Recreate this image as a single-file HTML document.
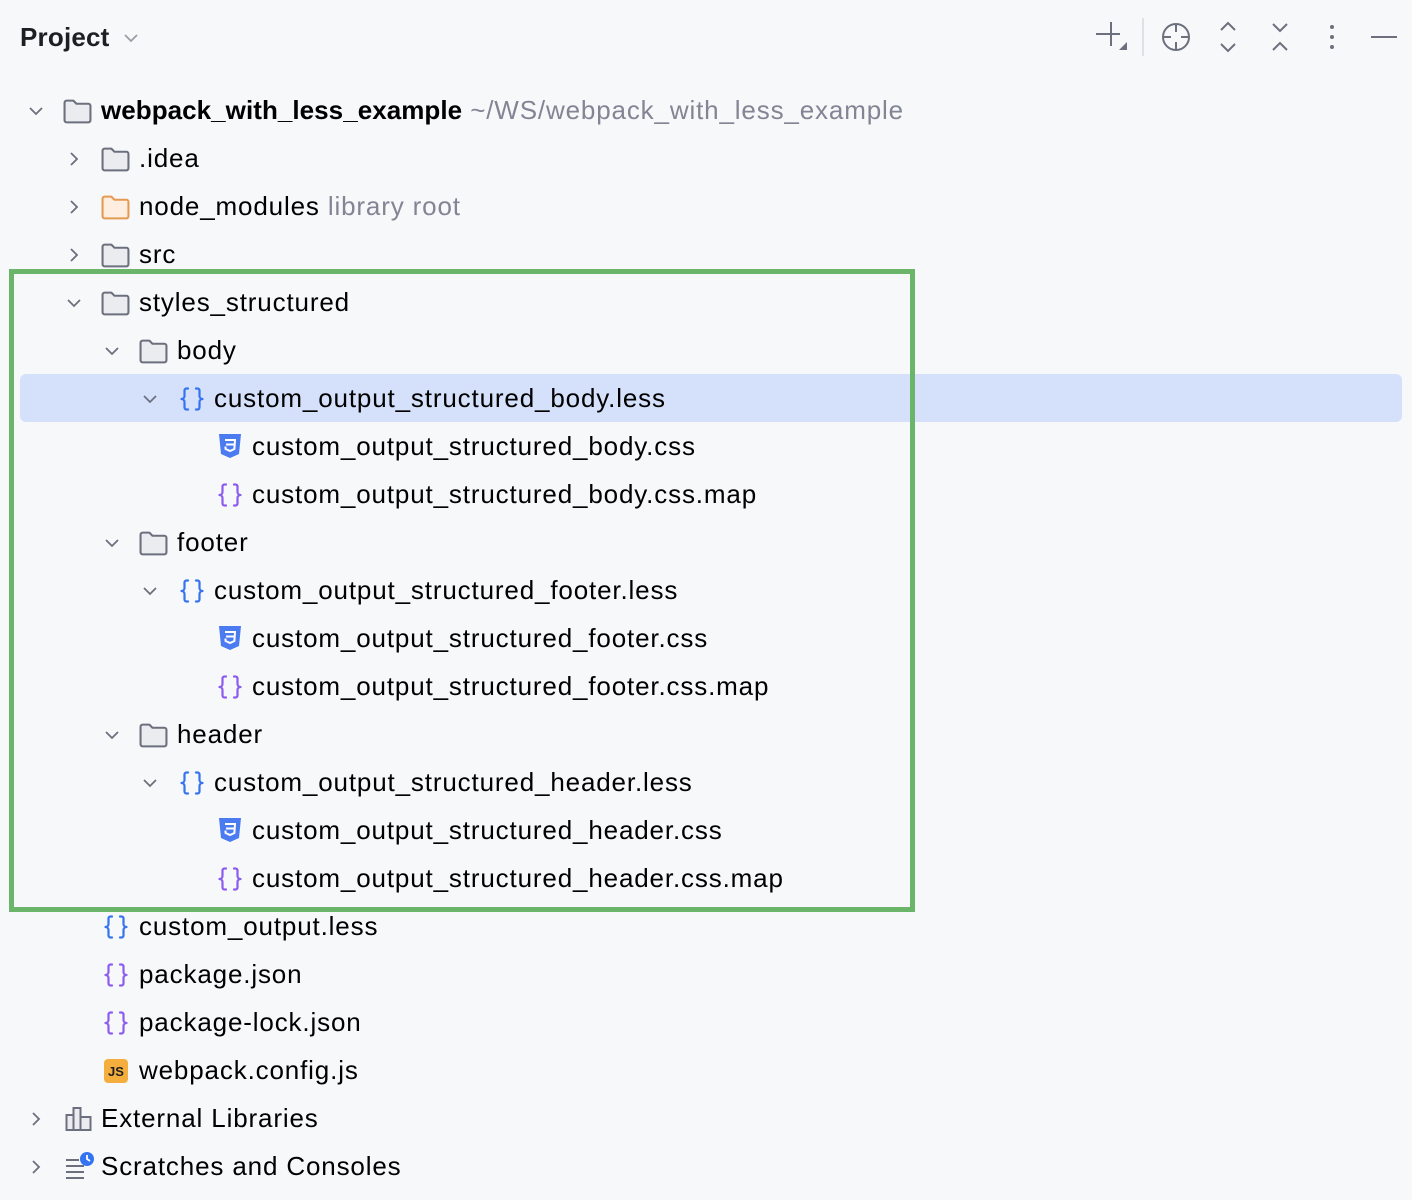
<!DOCTYPE html>
<html><head><meta charset="utf-8"><style>
body{margin:0;width:1412px;height:1200px;background:#f7f8fa;font-family:"Liberation Sans",sans-serif;color:#000;position:relative;overflow:hidden}
.r{position:absolute;height:48px;line-height:47px;font-size:26px;letter-spacing:0.85px;white-space:nowrap}
.r b{letter-spacing:0.05px}
.r svg{position:absolute}
.g{color:#818594}
.a{position:absolute;top:0}
</style></head><body>
<svg width="0" height="0" style="position:absolute">
<defs>
<symbol id="fold" viewBox="0 0 28 26"><path d="M1.5 4.5a2 2 0 0 1 2-2h6.5l3 3h11.5a2 2 0 0 1 2 2v14a2 2 0 0 1-2 2h-21a2 2 0 0 1-2-2z" fill="#ebecf0" stroke="#6c707e" stroke-width="2" stroke-linejoin="round"/></symbol>
<symbol id="ofold" viewBox="0 0 28 26"><path d="M1.5 4.5a2 2 0 0 1 2-2h6.5l3 3h11.5a2 2 0 0 1 2 2v14a2 2 0 0 1-2 2h-21a2 2 0 0 1-2-2z" fill="#fdeee0" stroke="#e59a52" stroke-width="2" stroke-linejoin="round"/></symbol>
<symbol id="br" viewBox="0 0 26 26"><path d="M9 2.5h-1.5a2 2 0 0 0-2 2v5.5a3 3 0 0 1-3 3a3 3 0 0 1 3 3v5.5a2 2 0 0 0 2 2h1.5M17 2.5h1.5a2 2 0 0 1 2 2v5.5a3 3 0 0 0 3 3a3 3 0 0 0-3 3v5.5a2 2 0 0 1-2 2h-1.5" fill="none" stroke="currentColor" stroke-width="2.2" stroke-linecap="round" stroke-linejoin="round"/></symbol>
<symbol id="css" viewBox="0 0 26 26"><path d="M2 1h22l-2 20-9 4-9-4z" fill="#4a7bf0"/><path d="M8 7h10l-.6 9-4.4 2-4.4-2-.2-2.5M9 11.5h8.5" fill="none" stroke="#fff" stroke-width="2"/></symbol>
<symbol id="dn" viewBox="0 0 16 16"><path d="M2 5l6 6 6-6" fill="none" stroke="#6c707e" stroke-width="1.8"/></symbol>
<symbol id="rt" viewBox="0 0 16 16"><path d="M5 2l6 6-6 6" fill="none" stroke="#6c707e" stroke-width="1.8"/></symbol>
</defs></svg>

<div style="position:absolute;left:20px;top:18px;font-size:26px;font-weight:bold;color:#1e1f22;line-height:38px;letter-spacing:0.2px">Project</div>
<svg style="position:absolute;left:123px;top:30px" width="16" height="16"><path d="M2 5l6 6 6-6" fill="none" stroke="#9a9ca6" stroke-width="1.8"/></svg>

<svg style="position:absolute;left:1090px;top:18px" width="320" height="40" fill="none" stroke="#6c707e" stroke-width="2">
<path d="M21 4v24M6 16h24"/><path d="M37 24v8h-8z" fill="#6c707e" stroke="none"/>
<path d="M53 0v38" stroke="#dfe1e5"/>
<circle cx="86" cy="19" r="13"/><path d="M86 6v8M86 24v8M73 19h8M91 19h8"/>
<path d="M131 12l7-7 7 7M131 26l7 7 7-7"/>
<path d="M183 6l7 7 7-7M183 32l7-7 7 7"/>
<circle cx="242" cy="9" r="2" fill="#6c707e" stroke="none"/><circle cx="242" cy="19" r="2" fill="#6c707e" stroke="none"/><circle cx="242" cy="29" r="2" fill="#6c707e" stroke="none"/>
<path d="M281 19h26"/>
</svg>

<div style="position:absolute;left:20px;top:374px;width:1382px;height:48px;background:#d5e1fb;border-radius:6px"></div>
<div style="position:absolute;left:9px;top:269px;width:896px;height:633px;border:5px solid #6ab56a"></div>

<div class="r" style="top:87px;left:0"><svg class="a" style="left:28px;top:16px" width="16" height="16"><use href="#dn"/></svg><svg style="left:63px;top:11px" width="29" height="27"><use href="#fold"/></svg><span style="position:absolute;left:101px"><b>webpack_with_less_example</b> <span class="g">~/WS/webpack_with_less_example</span></span></div>
<div class="r" style="top:135px;left:0"><svg style="left:66px;top:16px" width="16" height="16"><use href="#rt"/></svg><svg style="left:101px;top:11px" width="29" height="27"><use href="#fold"/></svg><span style="position:absolute;left:139px">.idea</span></div>
<div class="r" style="top:183px;left:0"><svg style="left:66px;top:16px" width="16" height="16"><use href="#rt"/></svg><svg style="left:101px;top:11px" width="29" height="27"><use href="#ofold"/></svg><span style="position:absolute;left:139px">node_modules <span class="g">library root</span></span></div>
<div class="r" style="top:231px;left:0"><svg style="left:66px;top:16px" width="16" height="16"><use href="#rt"/></svg><svg style="left:101px;top:11px" width="29" height="27"><use href="#fold"/></svg><span style="position:absolute;left:139px">src</span></div>
<div class="r" style="top:279px;left:0"><svg style="left:66px;top:16px" width="16" height="16"><use href="#dn"/></svg><svg style="left:101px;top:11px" width="29" height="27"><use href="#fold"/></svg><span style="position:absolute;left:139px">styles_structured</span></div>

<div class="r" style="top:327px;left:0"><svg style="left:104px;top:16px" width="16" height="16"><use href="#dn"/></svg><svg style="left:139px;top:11px" width="29" height="27"><use href="#fold"/></svg><span style="position:absolute;left:177px">body</span></div>
<div class="r" style="top:375px;left:0"><svg style="left:142px;top:16px" width="16" height="16"><use href="#dn"/></svg><svg style="left:179px;top:11px;color:#3574f0" width="26" height="26"><use href="#br"/></svg><span style="position:absolute;left:214px">custom_output_structured_body.less</span></div>
<div class="r" style="top:423px;left:0"><svg style="left:217px;top:10px" width="26" height="26"><use href="#css"/></svg><span style="position:absolute;left:252px">custom_output_structured_body.css</span></div>
<div class="r" style="top:471px;left:0"><svg style="left:217px;top:11px;color:#8b5cf0" width="26" height="26"><use href="#br"/></svg><span style="position:absolute;left:252px">custom_output_structured_body.css.map</span></div>

<div class="r" style="top:519px;left:0"><svg style="left:104px;top:16px" width="16" height="16"><use href="#dn"/></svg><svg style="left:139px;top:11px" width="29" height="27"><use href="#fold"/></svg><span style="position:absolute;left:177px">footer</span></div>
<div class="r" style="top:567px;left:0"><svg style="left:142px;top:16px" width="16" height="16"><use href="#dn"/></svg><svg style="left:179px;top:11px;color:#3574f0" width="26" height="26"><use href="#br"/></svg><span style="position:absolute;left:214px">custom_output_structured_footer.less</span></div>
<div class="r" style="top:615px;left:0"><svg style="left:217px;top:10px" width="26" height="26"><use href="#css"/></svg><span style="position:absolute;left:252px">custom_output_structured_footer.css</span></div>
<div class="r" style="top:663px;left:0"><svg style="left:217px;top:11px;color:#8b5cf0" width="26" height="26"><use href="#br"/></svg><span style="position:absolute;left:252px">custom_output_structured_footer.css.map</span></div>

<div class="r" style="top:711px;left:0"><svg style="left:104px;top:16px" width="16" height="16"><use href="#dn"/></svg><svg style="left:139px;top:11px" width="29" height="27"><use href="#fold"/></svg><span style="position:absolute;left:177px">header</span></div>
<div class="r" style="top:759px;left:0"><svg style="left:142px;top:16px" width="16" height="16"><use href="#dn"/></svg><svg style="left:179px;top:11px;color:#3574f0" width="26" height="26"><use href="#br"/></svg><span style="position:absolute;left:214px">custom_output_structured_header.less</span></div>
<div class="r" style="top:807px;left:0"><svg style="left:217px;top:10px" width="26" height="26"><use href="#css"/></svg><span style="position:absolute;left:252px">custom_output_structured_header.css</span></div>
<div class="r" style="top:855px;left:0"><svg style="left:217px;top:11px;color:#8b5cf0" width="26" height="26"><use href="#br"/></svg><span style="position:absolute;left:252px">custom_output_structured_header.css.map</span></div>

<div class="r" style="top:903px;left:0"><svg style="left:103px;top:11px;color:#3574f0" width="26" height="26"><use href="#br"/></svg><span style="position:absolute;left:139px">custom_output.less</span></div>
<div class="r" style="top:951px;left:0"><svg style="left:103px;top:11px;color:#8b5cf0" width="26" height="26"><use href="#br"/></svg><span style="position:absolute;left:139px">package.json</span></div>
<div class="r" style="top:999px;left:0"><svg style="left:103px;top:11px;color:#8b5cf0" width="26" height="26"><use href="#br"/></svg><span style="position:absolute;left:139px">package-lock.json</span></div>
<div class="r" style="top:1047px;left:0"><div style="position:absolute;left:104px;top:12px;width:24px;height:24px;background:#f4ae3d;border-radius:4px;font-size:13px;font-weight:bold;letter-spacing:0;line-height:26px;text-align:center;color:#1e1f22">JS</div><span style="position:absolute;left:139px">webpack.config.js</span></div>
<div class="r" style="top:1095px;left:0"><svg style="left:28px;top:16px" width="16" height="16"><use href="#rt"/></svg><svg style="left:65px;top:11px" width="28" height="26" fill="#ebecf0" stroke="#6c707e" stroke-width="2"><rect x="1.5" y="9" width="7" height="15"/><rect x="8.5" y="2" width="7" height="22"/><rect x="15.5" y="11" width="10" height="13"/></svg><span style="position:absolute;left:101px">External Libraries</span></div>
<div class="r" style="top:1143px;left:0"><svg style="left:28px;top:16px" width="16" height="16"><use href="#rt"/></svg><svg style="left:65px;top:8px" width="30" height="30" stroke="#6c707e" stroke-width="2"><path d="M1 9h13M1 15h18M1 21h18M1 27h18"/><circle cx="22" cy="8" r="7" fill="#3574f0" stroke="none"/><path d="M22 4v4l3 2" stroke="#fff" stroke-width="1.8" fill="none"/></svg><span style="position:absolute;left:101px">Scratches and Consoles</span></div>
</body></html>
